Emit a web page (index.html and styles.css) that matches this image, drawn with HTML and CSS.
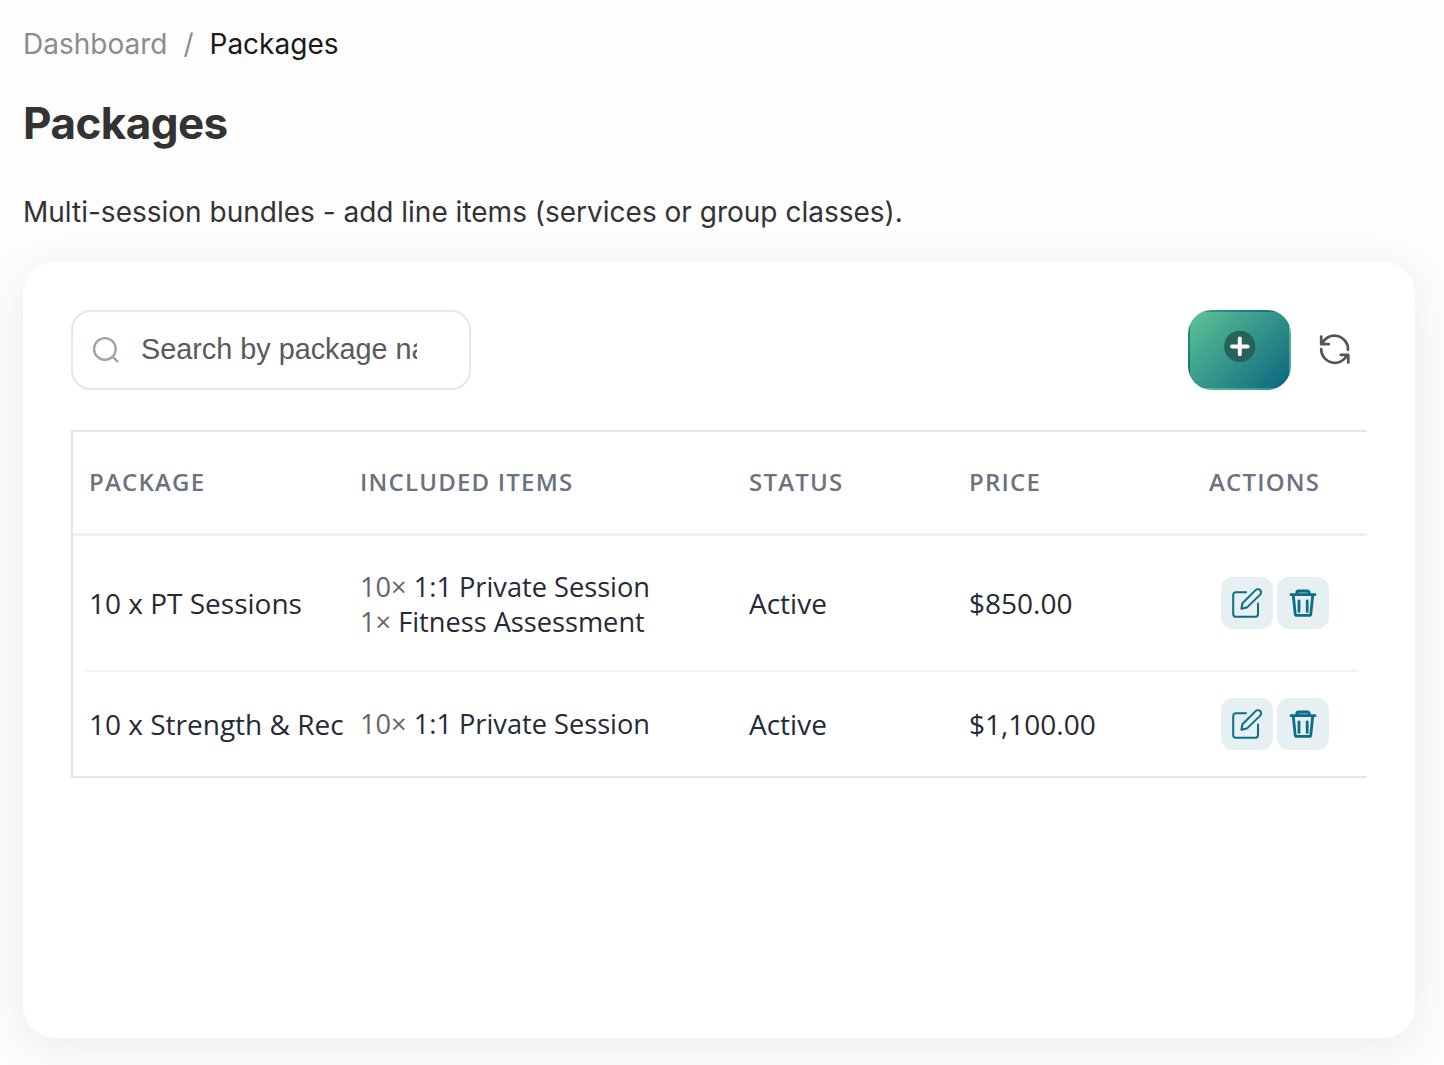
FILE: index.html
```html
<!DOCTYPE html>
<html lang="en">

<head>
    <meta charset="utf-8">
    <title>Packages</title>
    <meta name="viewport" content="width=device-width">
    <link rel="stylesheet" href="styles.css">
</head>

<body>
    <svg class="sprite" aria-hidden="true">
        <symbol id="icon-edit" viewBox="0 0 52 52">
            <path d="M25 15.3H14.8a2.6 2.6 0 0 0-2.6 2.6v19.2a2.6 2.6 0 0 0 2.6 2.6h19.6a2.6 2.6 0 0 0 2.6-2.6V26.5" />
            <path d="M20.4 31.8l1-5.6 13.2-13.1a3.2 3.2 0 0 1 4.6 4.5L25.8 30.6z" />
        </symbol>
        <symbol id="icon-trash" viewBox="0 0 52 52">
            <path class="lid" d="M19.8 17.4v-1.9a1.6 1.6 0 0 1 1.6-1.6h9.2a1.6 1.6 0 0 1 1.6 1.6v1.9" />
            <path d="M14 17.7h24M16.3 18.5l1.9 18.3a1.6 1.6 0 0 0 1.6 1.5h12.4a1.6 1.6 0 0 0 1.6-1.5l1.9-18.3M22 24v10.5M30.2 24v10.5" />
        </symbol>
    </svg>

    <nav class="breadcrumb">
        <a href="#">Dashboard</a>
        <span class="sep">/</span>
        <span class="current">Packages</span>
    </nav>
    <h1>Packages</h1>
    <p class="intro">Multi-session bundles - add line items (services or group classes).</p>

    <div class="card">
        <div class="toolbar">
            <div class="search">
                <svg class="search-icon" viewBox="0 0 28 28">
                    <circle cx="11.9" cy="12.9" r="10.8" />
                    <path d="M19.6 20.6l4.8 4.8" />
                </svg>
                <input type="text" placeholder="Search by package name">
            </div>
            <div class="tools">
                <button class="add" aria-label="Add">
                    <svg viewBox="0 0 32 32">
                        <circle cx="15.8" cy="16.4" r="15.6" />
                        <path d="M15.8 8.6v15.6M8 16.4h15.6" />
                    </svg>
                </button>
                <button class="refresh" aria-label="Refresh">
                    <svg viewBox="0 0 32 32">
                        <path d="M2.2 2.6v7.6h7.6M2.8 10.2A13.6 13.6 0 0 1 29 15.8" />
                        <path d="M29.3 28.6v-7.8h-7.6M28.2 20.8A13.6 13.6 0 0 1 2.2 15.2" />
                    </svg>
                </button>
            </div>
        </div>

        <div class="table">
            <div class="row head">
                <div>Package</div>
                <div>Included items</div>
                <div>Status</div>
                <div>Price</div>
                <div>Actions</div>
            </div>
            <div class="row first">
                <div>10 x PT Sessions</div>
                <div class="items">
                    <span><span class="qty">10×</span> 1:1 Private Session</span>
                    <span><span class="qty">1×</span> Fitness Assessment</span>
                </div>
                <div>Active</div>
                <div>$850.00</div>
                <div class="actions">
                    <button aria-label="Edit"><svg class="edit"><use href="#icon-edit" /></svg></button>
                    <button aria-label="Delete"><svg class="trash"><use href="#icon-trash" /></svg></button>
                </div>
            </div>
            <div class="row">
                <div>10 x Strength &amp; Rec</div>
                <div class="items">
                    <span><span class="qty">10×</span> 1:1 Private Session</span>
                </div>
                <div>Active</div>
                <div>$1,100.00</div>
                <div class="actions">
                    <button aria-label="Edit"><svg class="edit"><use href="#icon-edit" /></svg></button>
                    <button aria-label="Delete"><svg class="trash"><use href="#icon-trash" /></svg></button>
                </div>
            </div>
        </div>
    </div>
</body>

</html>
```
FILE: styles.css
```css
* {
    box-sizing: border-box;
}

body {
    margin: 0;
    padding: 24px 29px 0 23px;
    height: 1065px;
    overflow: hidden;
    background-color: #fdfdfd;
    color: #333;
    font-family: Inter, sans-serif;
    font-size: 28px;
}

svg {
    display: block;
    overflow: visible;
    fill: none;
    stroke-linecap: round;
    stroke-linejoin: round;
}

.sprite {
    display: none;
}

button {
    padding: 0;
    border: none;
    background: none;
}

.breadcrumb {
    display: flex;
    gap: 16px;
    line-height: 40px;
    color: #8c8c8c;
}

.breadcrumb a {
    color: inherit;
    text-decoration: none;
}

.breadcrumb .current {
    color: #1a1a1a;
}

h1 {
    margin: 31px 0 0;
    font-size: 44px;
    font-weight: 700;
    line-height: 56px;
    letter-spacing: -0.55px;
}

.intro {
    margin: 41px 0 0;
    line-height: 40px;
}

.card {
    height: 776px;
    margin-top: 30px;
    padding: 48px;
    border-radius: 32px;
    background-color: #fff;
    box-shadow: 0 8px 48px rgba(0, 0, 0, 0.08);
}

.toolbar {
    display: flex;
    justify-content: space-between;
    height: 80px;
}

.search {
    display: flex;
    align-items: center;
    width: 400px;
    padding: 0 52px 0 20px;
    border: 2px solid #e2e8ec;
    border-radius: 20px;
}

.search-icon {
    flex: none;
    width: 28px;
    height: 28px;
    margin-right: 20px;
    stroke: #9ca3af;
    stroke-width: 2.4;
}

.search input {
    width: 100%;
    min-width: 0;
    padding: 0 0 2px;
    border: none;
    outline: none;
    background: none;
    font-family: "Liberation Sans", Arial, sans-serif;
    font-size: 28.8px;
}

.search input::placeholder {
    color: #5a5a5a;
}

.tools {
    display: flex;
    align-items: center;
    gap: 28px;
    padding-right: 16px;
}

.add {
    display: flex;
    justify-content: center;
    width: 103px;
    height: 80px;
    padding-top: 18px;
    border: 2px solid transparent;
    border-radius: 24px;
    background-image: linear-gradient(135deg, #5bc495, #0b6680);
}

.add svg {
    width: 32px;
    height: 32px;
    stroke: #fff;
    stroke-width: 4;
}

.add circle {
    fill: #24625a;
    stroke: none;
}

.refresh svg {
    width: 32px;
    height: 32px;
    stroke: #555;
    stroke-width: 2.7;
}

.table {
    margin-top: 40px;
    border: 2px solid #e5e5e5;
    border-right: none;
    font-family: "Open Sans", sans-serif;
    color: #262a36;
}

.row {
    display: grid;
    grid-template-columns: 270px 389px 220px 240px 1fr;
    align-items: center;
    height: 104px;
    margin: 0 8px;
    white-space: nowrap;
}

.row > div {
    padding-left: 9px;
}

.row > div:first-child {
    padding-left: 8px;
}

.row.head {
    margin: 0;
    padding: 0 8px 2px;
    border-bottom: 3px solid #f0f0f0;
    color: #6b7280;
    font-size: 24px;
    font-weight: 600;
    letter-spacing: 1.2px;
    text-transform: uppercase;
}

.row.first {
    height: 136px;
    margin-left: 12px;
    grid-template-columns: 266px 389px 220px 240px 1fr;
    border-bottom: 2px solid #f3f3f3;
    border-radius: 4px;
}

.row.first > div:first-child {
    padding-left: 4px;
}

.items {
    display: grid;
    padding-bottom: 1px;
    font-size: 27.2px;
    line-height: 35px;
}

.first .items {
    padding-top: 2px;
    padding-bottom: 0;
}

.qty {
    color: #666;
}

.row > .actions {
    display: flex;
    gap: 4px;
    padding-left: 21px;
}

.actions button {
    border-radius: 12px;
    background-color: #e6eff2;
}

.actions svg {
    width: 52px;
    height: 52px;
    stroke: #0b6e83;
}

.actions .edit {
    stroke-width: 2;
}

.actions .trash {
    stroke-width: 2.8;
}

.lid {
    fill: #78adb8;
}
```
